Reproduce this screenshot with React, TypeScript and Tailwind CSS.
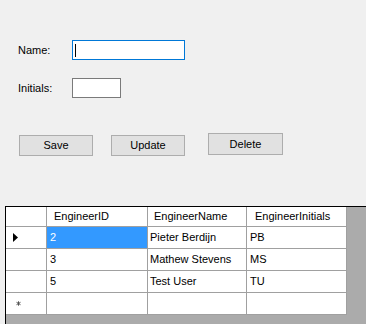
import React from "react";

const rows = [
  { id: "2", name: "Pieter Berdijn", ini: "PB" },
  { id: "3", name: "Mathew Stevens", ini: "MS" },
  { id: "5", name: "Test User", ini: "TU" },
];

function Btn({ label, className }: { label: string; className: string }) {
  return (
    <div
      className={
        "flex items-center justify-center border border-[#adadad] bg-[#e1e1e1] text-black " +
        className
      }
    >
      {label}
    </div>
  );
}

const cell = "border-r border-b border-[#a0a0a0] bg-white flex items-center";

export default function App() {
  return (
    <div
      className="w-[366px] h-[324px] bg-[#f0f0f0] overflow-hidden flex flex-col text-[11px] text-black"
      style={{ fontFamily: '"Liberation Sans", Arial, sans-serif' }}
    >
      <div className="mt-[40px] flex items-center">
        <div className="ml-[18px] w-[54px]">Name:</div>
        <div className="w-[113px] h-[20px] border border-[#0078d7] bg-white flex items-center pl-[2px]">
          <span className="w-px h-[13px] bg-black" />
        </div>
      </div>
      <div className="mt-[18px] flex items-center">
        <div className="ml-[18px] w-[54px]">Initials:</div>
        <div className="w-[49px] h-[20px] border border-[#7a7a7a] bg-white" />
      </div>
      <div className="mt-[35px] flex items-start">
        <Btn label="Save" className="ml-[19px] mt-[2px] w-[74px] h-[21px]" />
        <Btn label="Update" className="ml-[18px] mt-[2px] w-[74px] h-[21px]" />
        <Btn label="Delete" className="ml-[23px] w-[75px] h-[22px]" />
      </div>
      <div className="mt-[50px] ml-[5px] flex-1 border-l border-t border-black bg-[#ababab]">
        <div className="grid w-[341px] grid-cols-[41px_101px_99px_100px]">
          <div className={cell + " h-[20px]"} />
          <div className={cell + " h-[20px] pl-[7px]"}>EngineerID</div>
          <div className={cell + " h-[20px] pl-[6px]"}>EngineerName</div>
          <div className={cell + " h-[20px] pl-[8px]"}>EngineerInitials</div>
          {rows.map((r, i) => (
            <React.Fragment key={r.id}>
              <div className={cell + " h-[22px] pl-[7px]"}>
                {i === 0 && (
                  <svg width="5" height="9" viewBox="0 0 5 9">
                    <path d="M0 0 L5 4.5 L0 9 Z" fill="#000" />
                  </svg>
                )}
              </div>
              <div
                className={
                  cell +
                  " h-[22px] pl-[3px] " +
                  (i === 0 ? "!bg-[#3399ff] text-white" : "")
                }
              >
                {r.id}
              </div>
              <div className={cell + " h-[22px] pl-[2px]"}>{r.name}</div>
              <div className={cell + " h-[22px] pl-[3px]"}>{r.ini}</div>
            </React.Fragment>
          ))}
          <div className={cell + " h-[22px] pl-[10px]"}>
            <svg width="5" height="5" viewBox="0 0 5 5">
              <path
                d="M2.5 0.3 V4.7 M0.5 1.3 L4.5 3.7 M0.5 3.7 L4.5 1.3"
                stroke="#555"
                strokeWidth="1"
              />
            </svg>
          </div>
          <div className={cell + " h-[22px]"} />
          <div className={cell + " h-[22px]"} />
          <div className={cell + " h-[22px]"} />
        </div>
      </div>
    </div>
  );
}
